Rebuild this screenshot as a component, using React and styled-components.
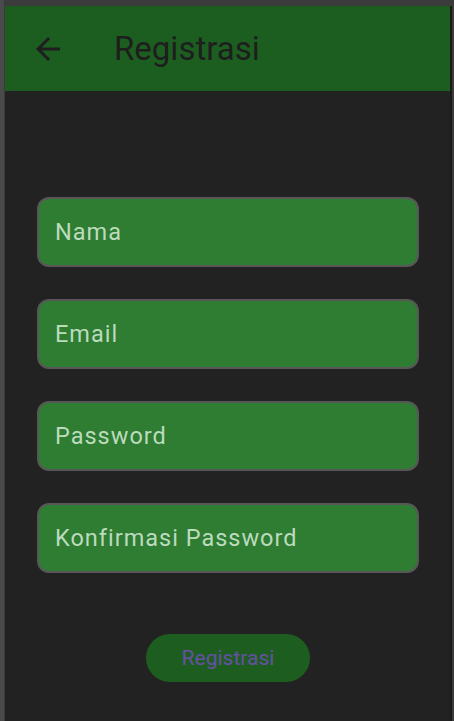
import React from "react";
import styled, { createGlobalStyle } from "styled-components";

const GlobalStyle = createGlobalStyle`
  html, body {
    margin: 0;
    padding: 0;
    background: #3b3b3b;
    font-family: Roboto, "Liberation Sans", sans-serif;
  }
`;

// outer device frame
const Frame = styled.div`
  display: flex;
  height: 721px;
  padding-top: 6px;
  box-sizing: border-box;
  border-left: 4px solid #4a4a4a;
`;

const Screen = styled.div`
  flex: 1;
  margin-left: 1px;
  margin-right: 2px;
  background: #222222;
  display: flex;
  flex-direction: column;
  border-right: 2px solid #1a1a1a;
`;

const AppBar = styled.header`
  height: 85px;
  background: #1c5e20;
  display: flex;
  align-items: center;
  padding-left: 25px;
  flex-shrink: 0;
`;

const BackButton = styled.button`
  width: 36px;
  height: 36px;
  padding: 0;
  border: none;
  background: none;
  color: #1e1e1e;
  display: flex;
  align-items: center;
  justify-content: center;
  cursor: pointer;
`;

const Title = styled.h1`
  margin: 0 0 0 48px;
  font-size: 33px;
  font-weight: 400;
  color: #1e1e1e;
`;

const Form = styled.form`
  display: flex;
  flex-direction: column;
  gap: 32px;
  padding: 106px 31px 0 32px;
`;

const Field = styled.input`
  height: 70px;
  box-sizing: border-box;
  border: 2px solid #575757;
  border-radius: 12px;
  background: #2e7d32;
  padding: 0 16px;
  font-family: Roboto, "Liberation Sans", sans-serif;
  font-size: 23.5px;
  letter-spacing: 1px;
  color: #c8e6c9;
  outline: none;

  &::placeholder {
    color: #bcdbbd;
  }
`;

const Actions = styled.div`
  display: flex;
  justify-content: center;
  padding: 61px 0 0 1px;
`;

const SubmitButton = styled.button`
  width: 164px;
  height: 48px;
  border: none;
  border-radius: 24px;
  background: #1d5e20;
  color: #6750a4;
  font-family: Roboto, "Liberation Sans", sans-serif;
  font-size: 21px;
  cursor: pointer;
`;

const ArrowBack = () => (
  <svg width="36" height="36" viewBox="0 0 24 24" fill="currentColor">
    <path d="M20 11H7.83l5.59-5.59L12 4l-8 8 8 8 1.41-1.41L7.83 13H20v-2z" />
  </svg>
);

const fields = ["Nama", "Email", "Password", "Konfirmasi Password"];

const App = () => {
  return (
    <>
      <GlobalStyle />
      <Frame>
        <Screen>
          <AppBar>
            <BackButton aria-label="Kembali">
              <ArrowBack />
            </BackButton>
            <Title>Registrasi</Title>
          </AppBar>
          <Form onSubmit={(e) => e.preventDefault()}>
            {fields.map((label) => (
              <Field
                key={label}
                placeholder={label}
                type={label.includes("Password") ? "password" : "text"}
              />
            ))}
          </Form>
          <Actions>
            <SubmitButton type="button">Registrasi</SubmitButton>
          </Actions>
        </Screen>
      </Frame>
    </>
  );
};

export default App;
